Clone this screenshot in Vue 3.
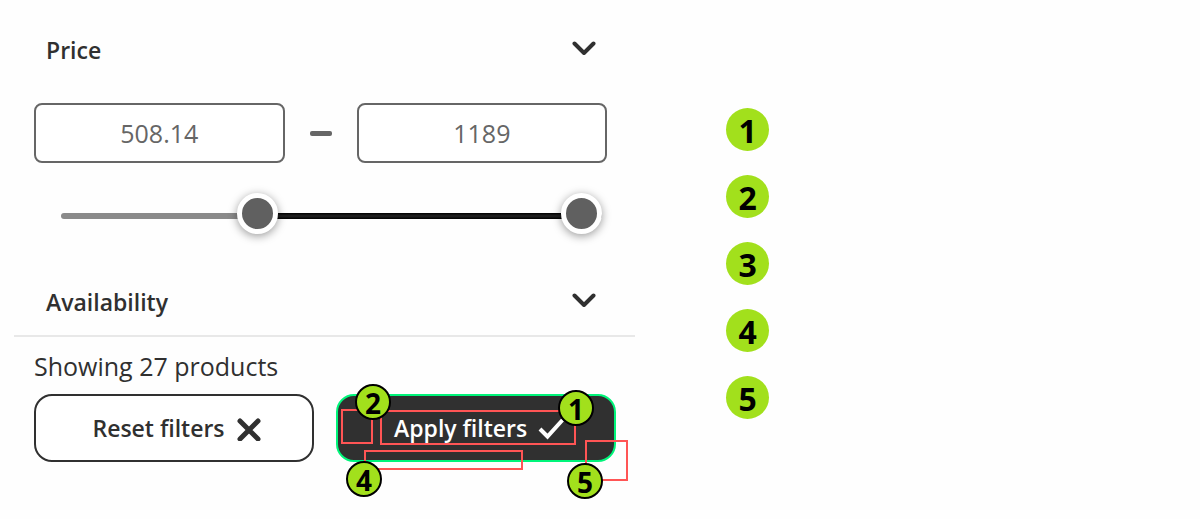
<script setup>
import { computed, ref } from 'vue'

const MIN = 137
const MAX = 1189
const low = ref(508.14)
const high = ref(1189)
const legend = [1, 2, 3, 4, 5]

const share = (value) => (value - MIN) / (MAX - MIN)
const fillStyle = computed(() => ({
  left: `${share(low.value) * 100}%`,
  right: `${(1 - share(high.value)) * 100}%`,
}))
</script>

<template>
  <main class="page">
    <form class="panel" @submit.prevent>
      <button type="button" class="section">
        <span>Price</span>
        <svg class="chevron" viewBox="0 0 24 14" aria-hidden="true"><path d="M2.5 2.5 12 12 21.5 2.5" /></svg>
      </button>

      <div class="prices">
        <input v-model.number="low" class="price" type="text" aria-label="Minimum price" />
        <span class="dash"></span>
        <input v-model.number="high" class="price" type="text" aria-label="Maximum price" />
      </div>

      <div class="slider">
        <div class="track"><div class="rail"><div class="fill" :style="fillStyle"></div></div></div>
        <input v-model.number="low" class="range" type="range" :min="MIN" :max="MAX" step="any" aria-label="Minimum price slider" />
        <input v-model.number="high" class="range" type="range" :min="MIN" :max="MAX" step="any" aria-label="Maximum price slider" />
      </div>

      <button type="button" class="section">
        <span>Availability</span>
        <svg class="chevron" viewBox="0 0 24 14" aria-hidden="true"><path d="M2.5 2.5 12 12 21.5 2.5" /></svg>
      </button>

      <footer class="footer">
        <p class="count">Showing 27 products</p>
        <div class="actions">
          <button type="reset" class="action">
            <span>Reset filters</span>
            <svg class="icon cross" viewBox="0 0 26 26" aria-hidden="true"><path d="M4 6 22 24M22 6 4 24" /></svg>
          </button>
          <div class="apply">
            <button type="submit" class="action primary">
              <span>Apply filters</span>
              <svg class="icon check" viewBox="0 0 26 26" aria-hidden="true"><path d="M2 14 9.500 21.500 24.500 5" /></svg>
            </button>
            <span class="outline label-area"></span>
            <span class="outline side-area"></span>
            <span class="outline bottom-area"></span>
            <span class="outline corner-area"></span>
            <span class="marker m1">1</span>
            <span class="marker m2">2</span>
            <span class="marker m4">4</span>
            <span class="marker m5">5</span>
          </div>
        </div>
      </footer>
    </form>

    <ol class="legend">
      <li v-for="n in legend" :key="n" class="dot">{{ n }}</li>
    </ol>
  </main>
</template>

<style>
body {
  margin: 0;
  background: #fefefe;
}
</style>

<style scoped>
.page {
  display: grid;
  grid-template-columns: minmax(0, 53fr) minmax(0, 47fr);
  min-height: 100vh;
  padding: 20px 14px;
  font-family: "Open Sans", "Noto Sans", sans-serif;
  color: #303030;
}

.page *,
.page {
  box-sizing: border-box;
}

.section {
  display: flex;
  align-items: center;
  justify-content: space-between;
  width: 100%;
  height: 60px;
  padding: 0 39px 0 32px;
  border: 0;
  background: none;
  color: inherit;
  font: 600 23px/32px "Open Sans", "Noto Sans", sans-serif;
}

.chevron {
  width: 24px;
  height: 14px;
  margin-bottom: 4px;
  fill: none;
  stroke: #303030;
  stroke-width: 4;
  stroke-linecap: round;
  stroke-linejoin: round;
}

.prices {
  display: flex;
  align-items: center;
  gap: 25px;
  margin-top: 23px;
  padding: 0 28px 0 20px;
}

.price {
  flex: 1;
  min-width: 0;
  height: 60px;
  padding: 0;
  border: 2px solid #666;
  border-radius: 8px;
  background: #fff;
  color: #666;
  text-align: center;
  font: 400 25px/32px "Open Sans", "Noto Sans", sans-serif;
}

.dash {
  width: 22px;
  height: 5px;
  border-radius: 2px;
  background: #666;
}

.slider {
  position: relative;
  height: 41px;
  margin: 30px 33px 38px 47px;
}

.track {
  position: absolute;
  top: 20px;
  left: 0;
  right: 0;
  height: 6px;
  padding: 0 20px;
  border-radius: 3px;
  background: #8a8a8a;
}

.rail {
  position: relative;
  height: 6px;
}

.fill {
  position: absolute;
  top: 0;
  bottom: 0;
  background: linear-gradient(#000, #222 50%, #000);
}

.range {
  position: absolute;
  inset: 0;
  width: 100%;
  height: 41px;
  margin: 0;
  appearance: none;
  background: none;
  pointer-events: none;
}

.range::-webkit-slider-thumb {
  appearance: none;
  box-sizing: border-box;
  width: 41px;
  height: 41px;
  border: 5px solid #fff;
  border-radius: 50%;
  background: #606060;
  box-shadow: 0 2px 10px rgba(0, 0, 0, 0.4);
  pointer-events: auto;
}

.footer {
  margin-top: 3px;
  padding: 11px 19px 0 20px;
  border-top: 2px solid #e8e8e8;
}

.count {
  margin: 0 0 10px;
  font-size: 25px;
  line-height: 36px;
}

.actions {
  display: grid;
  grid-template-columns: 1fr 1fr;
  gap: 22px;
}

.apply {
  position: relative;
}

.action {
  display: flex;
  align-items: center;
  justify-content: center;
  gap: 11px;
  width: 100%;
  height: 68px;
  padding: 0 4px 0 10px;
  border: 2px solid #303030;
  border-radius: 18px;
  background: #fff;
  color: #303030;
  white-space: nowrap;
  font: 600 23px/32px "Open Sans", "Noto Sans", sans-serif;
}

.primary {
  border-color: #00f57a;
  background: #303030;
  color: #fff;
}

.icon {
  flex: none;
  width: 26px;
  height: 26px;
  fill: none;
  stroke: currentColor;
}

.cross {
  stroke-width: 5;
  stroke-linecap: round;
}

.check {
  stroke-width: 4;
}

.outline {
  position: absolute;
  border: 2px solid #ff5555;
  pointer-events: none;
}

.label-area {
  left: 44px;
  top: 16px;
  width: 196px;
  height: 35px;
}

.side-area {
  left: 5px;
  top: 15px;
  width: 32px;
  height: 35px;
}

.bottom-area {
  left: 28px;
  top: 56px;
  width: 159px;
  height: 20px;
}

.corner-area {
  left: 249px;
  top: 46px;
  width: 43px;
  height: 41px;
}

.marker {
  position: absolute;
  width: 36px;
  height: 36px;
  border: 2px solid #000;
  border-radius: 50%;
  background: #a2e01c;
  color: #000;
  text-align: center;
  font-size: 28px;
  font-weight: 700;
  line-height: 34px;
}

.m1 {
  left: 222px;
  top: -4px;
}

.m2 {
  left: 19px;
  top: -10px;
}

.m4 {
  left: 10px;
  top: 67px;
}

.m5 {
  left: 231px;
  top: 69px;
}

.legend {
  display: flex;
  flex-direction: column;
  gap: 24px;
  margin: 0;
  padding: 88px 0 0 91px;
  list-style: none;
}

.dot {
  width: 43px;
  height: 43px;
  border-radius: 50%;
  background: #a2e01c;
  color: #000;
  text-align: center;
  font-size: 32px;
  font-weight: 700;
  line-height: 46px;
}
</style>
